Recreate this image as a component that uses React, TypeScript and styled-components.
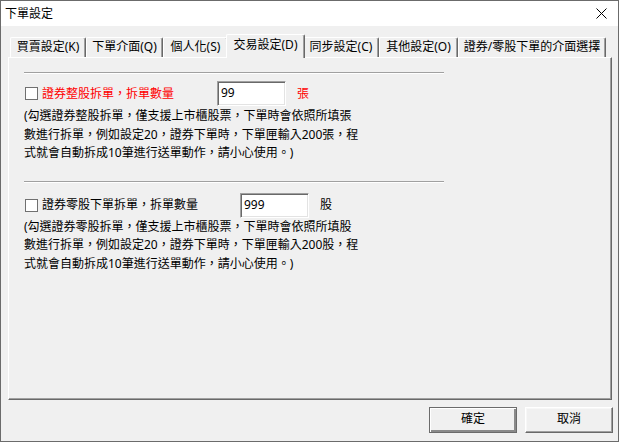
import React from 'react'
import styled, { createGlobalStyle } from 'styled-components'

const FONT = '"Noto Sans", "Noto Sans CJK TC", sans-serif'

const GlobalStyle = createGlobalStyle`
	html, body {
		margin: 0;
		padding: 0;
		background: #f0f0f0;
	}
	body {
		font-family: ${FONT};
		font-size: 12px;
		color: #000;
	}
	* {
		box-sizing: border-box;
	}
`

const Window = styled.div`
	width: 619px;
	height: 442px;
	border: 1px solid #6b6b6b;
	display: flex;
	flex-direction: column;
	background: #f0f0f0;
`

const TitleBar = styled.div`
	height: 25px;
	background: #fff;
	display: flex;
	align-items: center;
	justify-content: space-between;
	padding: 0 11px 0 4px;
	line-height: 14px;
`

const Body = styled.div`
	flex: 1;
	display: flex;
	flex-direction: column;
	padding: 8px 6px 8px 7px;
`

const TabStrip = styled.div`
	height: 23px;
	display: flex;
	align-items: flex-end;
	padding-left: 2px;
`

const Tab = styled.div<{ w: number; active?: boolean }>`
	position: relative;
	flex: none;
	width: ${p => p.w}px;
	height: ${p => (p.active ? 24 : 20)}px;
	margin: ${p => (p.active ? '0 -2px -1px' : '0')};
	z-index: ${p => (p.active ? 2 : 1)};
	background: #f0f0f0;
	border-top: 1px solid #fff;
	border-left: 1px solid #fff;
	border-right: 1px solid #696969;
	border-top-left-radius: 2px;
	border-top-right-radius: 2px;
	box-shadow: inset -1px 0 #a0a0a0;
	display: flex;
	align-items: ${p => (p.active ? 'flex-start' : 'center')};
	justify-content: center;
	padding-top: ${p => (p.active ? 3 : 0)}px;
	padding-bottom: ${p => (p.active ? 0 : 2)}px;
	line-height: 14px;
	white-space: nowrap;
`

const Panel = styled.div`
	flex: 1;
	border: 1px solid;
	border-color: #fff #696969 #696969 #fff;
	box-shadow: inset -1px -1px #a0a0a0;
	padding: 14px 0 0 15px;
`

const Separator = styled.div<{ top?: number }>`
	width: 420px;
	height: 2px;
	margin-top: ${p => p.top ?? 0}px;
	border-top: 1px solid #a0a0a0;
	border-bottom: 1px solid #fff;
`

const OptionRow = styled.div<{ top: number }>`
	display: flex;
	align-items: center;
	height: 25px;
	margin-top: ${p => p.top}px;
`

const CheckBox = styled.span`
	flex: none;
	width: 13px;
	height: 13px;
	margin-left: 1px;
	background: #fff;
	border: 1px solid #707070;
`

const Label = styled.span<{ w: number; red?: boolean }>`
	flex: none;
	width: ${p => p.w}px;
	margin-left: 4px;
	color: ${p => (p.red ? '#ff0000' : '#000')};
	line-height: 14px;
	white-space: nowrap;
`

const NumberBox = styled.input`
	flex: none;
	width: 69px;
	height: 25px;
	margin: 0;
	padding: 0 3px 2px;
	border: 1px solid;
	border-color: #a0a0a0 #fff #fff #a0a0a0;
	box-shadow: inset 1px 1px #696969, inset -1px -1px #e3e3e3;
	background: #fff;
	font-family: ${FONT};
	font-size: 12px;
	line-height: 14px;
	color: #000;
	outline: none;
	vertical-align: top;
`

const Unit = styled.span<{ red?: boolean }>`
	margin-left: 11px;
	color: ${p => (p.red ? '#ff0000' : '#000')};
	line-height: 14px;
`

const Note = styled.div<{ top: number }>`
	margin-top: ${p => p.top}px;
	line-height: 18.5px;
	white-space: nowrap;
`

const ButtonRow = styled.div`
	display: flex;
	justify-content: flex-end;
	gap: 8px;
	margin-top: 7px;
	margin-right: -1px;
`

const DialogButton = styled.button<{ primary?: boolean }>`
	width: 88px;
	height: 26px;
	margin: 0;
	padding: 0 0 2px;
	background: #f0f0f0;
	border: 1px solid;
	border-color: ${p => (p.primary ? '#6b6b6b' : '#fff #696969 #696969 #fff')};
	box-shadow: ${p =>
		p.primary
			? 'inset 1px 1px #fff, inset -2px -2px #8a8a8a'
			: 'inset -1px -1px #a0a0a0, inset 1px 1px #f7f7f7'};
	font-family: ${FONT};
	font-size: 12px;
	line-height: 14px;
	color: #000;
`

const tabs = [
	{ label: '買賣設定(K)', w: 76 },
	{ label: '下單介面(Q)', w: 77 },
	{ label: '個人化(S)', w: 65 },
	{ label: '交易設定(D)', w: 79, active: true },
	{ label: '同步設定(C)', w: 76 },
	{ label: '其他設定(O)', w: 79 },
	{ label: '證券/零股下單的介面選擇', w: 148 },
]

const CloseIcon = () => (
	<svg width="11" height="11" viewBox="0 0 11 11">
		<path d="M0.5 0.5 L10.5 10.5 M10.5 0.5 L0.5 10.5" stroke="#000" strokeWidth="1" fill="none" />
	</svg>
)

const App = () => {
	return (
		<>
			<GlobalStyle />
			<Window>
				<TitleBar>
					<span>下單設定</span>
					<CloseIcon />
				</TitleBar>
				<Body>
					<TabStrip>
						{tabs.map(t => (
							<Tab key={t.label} w={t.w} active={t.active}>
								{t.label}
							</Tab>
						))}
					</TabStrip>

					<Panel>
						{/* 整股拆單 */}
						<Separator />
						<OptionRow top={7}>
							<CheckBox />
							<Label red w={175}>
								證券整股拆單，拆單數量
							</Label>
							<NumberBox readOnly defaultValue="99" />
							<Unit red>張</Unit>
						</OptionRow>
						<Note top={1}>
							(勾選證券整股拆單，僅支援上市櫃股票，下單時會依照所填張
							<br />
							數進行拆單，例如設定20，證券下單時，下單匣輸入200張，程
							<br />
							式就會自動拆成10筆進行送單動作，請小心使用。)
						</Note>

						{/* 零股拆單 */}
						<Separator top={18} />
						<OptionRow top={10}>
							<CheckBox />
							<Label w={198}>證券零股下單拆單，拆單數量</Label>
							<NumberBox readOnly defaultValue="999" />
							<Unit>股</Unit>
						</OptionRow>
						<Note top={0}>
							(勾選證券零股拆單，僅支援上市櫃股票，下單時會依照所填股
							<br />
							數進行拆單，例如設定20，證券下單時，下單匣輸入200股，程
							<br />
							式就會自動拆成10筆進行送單動作，請小心使用。)
						</Note>
					</Panel>

					<ButtonRow>
						<DialogButton primary>確定</DialogButton>
						<DialogButton>取消</DialogButton>
					</ButtonRow>
				</Body>
			</Window>
		</>
	)
}

export default App
